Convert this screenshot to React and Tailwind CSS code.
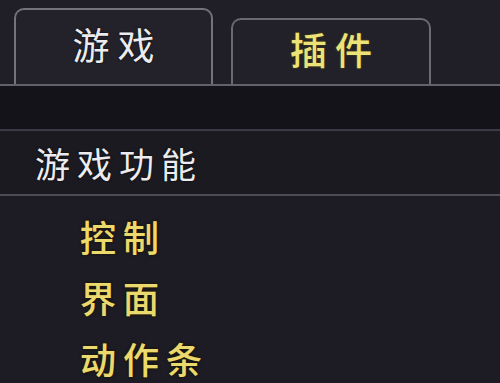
export default function App() {
  const font = { fontFamily: '"Noto Sans CJK SC", "Noto Sans", sans-serif' };
  const items = ['控制', '界面', '动作条'];

  return (
    <div className="w-[500px] h-[383px] overflow-hidden bg-[#201f27]" style={font}>
      {/* Tabs */}
      <div className="h-[84px] flex items-end pl-[14px] gap-[18px]">
        <div className="w-[199px] h-[76px] rounded-t-[10px] border-2 border-b-0 border-[#73737d] bg-[#23222a] flex justify-center pt-[16px]">
          <span className="text-[37px] leading-none tracking-[8px] pl-[8px] text-[#ececf0] [text-shadow:0_0_2px_#000]">游戏</span>
        </div>
        <div className="w-[200px] h-[66px] rounded-t-[10px] border-2 border-b-0 border-[#6a6a74] bg-[#22212a] flex justify-center pt-[11px]">
          <span className="text-[37px] leading-none tracking-[8px] pl-[8px] font-medium text-[#ece27a] [text-shadow:0_0_2px_#5a5200]">插件</span>
        </div>
      </div>
      <div className="h-[2px] bg-[#62626c]" />

      {/* Dark band */}
      <div className="h-[43px] bg-[#141319]" />
      <div className="h-[2px] bg-[#3c3b45]" />

      {/* Section header */}
      <div className="h-[63px] bg-[#1b1a21] flex items-center pl-[35px]">
        <span className="text-[35px] leading-none tracking-[7px] text-[#ececf0] [text-shadow:0_0_2px_#000]">游戏功能</span>
      </div>
      <div className="h-[2px] bg-[#4c4b56]" />

      {/* Items */}
      <div className="h-[187px] bg-[#1d1c24] pt-[22px] pl-[80px] flex flex-col gap-[25px]">
        {items.map((t) => (
          <span key={t} className="text-[36px] leading-none tracking-[7px] font-medium text-[#ecd96e] [text-shadow:0_0_1px_#6b5a00,0_0_3px_#000]">{t}</span>
        ))}
      </div>
    </div>
  );
}
